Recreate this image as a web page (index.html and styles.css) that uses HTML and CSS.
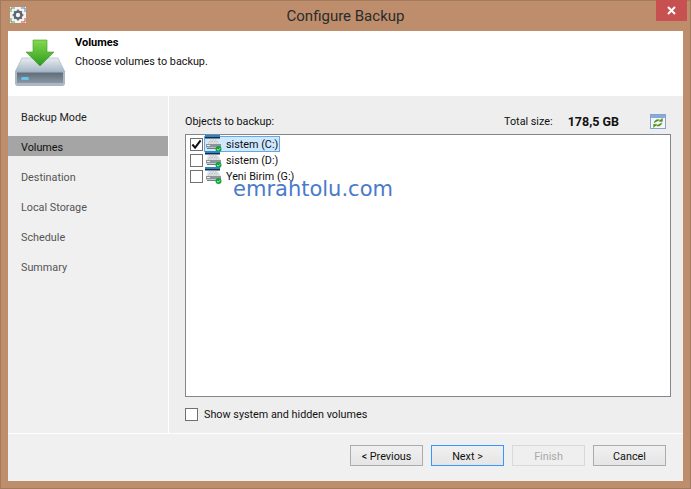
FILE: index.html
```html
<!DOCTYPE html>
<html lang="en">
<head>
<meta charset="utf-8">
<title>Configure Backup</title>
<link rel="stylesheet" href="styles.css">
</head>
<body>
<div class="window">
  <header class="titlebar">
    <svg class="app-icon" width="16" height="16" viewBox="0 0 16 16">
      <rect x="0" y="0" width="16" height="16" fill="#f4f4f4"/>
      <path d="M1 5V1h4" fill="none" stroke="#4f9a58"/><path d="M11 1h4v4" fill="none" stroke="#4b86c8"/>
      <path d="M1 11v4h4" fill="none" stroke="#4f9a58"/><path d="M11 15h4v-4" fill="none" stroke="#d0493c"/>
      <circle cx="8" cy="8" r="3.400" fill="none" stroke="#5c6670" stroke-width="2.400"/>
      <path d="M8 2.600v2M8 11.400v2M2.600 8h2M11.400 8h2M4.200 4.200l1.400 1.400M10.400 10.400l1.400 1.400M4.200 11.800l1.400-1.400M10.400 5.600l1.400-1.400" stroke="#5c6670" stroke-width="1.600"/>
    </svg>
    <span class="title">Configure Backup</span>
    <button class="close" aria-label="Close">
      <svg width="9" height="9" viewBox="0 0 9 9"><path d="M1 1l7 7M8 1l-7 7" stroke="#fff" stroke-width="2"/></svg>
    </button>
  </header>
  <div class="client">
    <section class="banner">
      <svg class="banner-icon" width="51" height="48" viewBox="0 0 51 48">
        <defs>
          <linearGradient id="top" x1="0" y1="0" x2="0" y2="1"><stop offset="0" stop-color="#e8ecf0"/><stop offset="1" stop-color="#a4b5c6"/></linearGradient>
          <linearGradient id="front" x1="0" y1="0" x2="0" y2="1"><stop offset="0" stop-color="#5f6b77"/><stop offset="1" stop-color="#8a96a2"/></linearGradient>
          <linearGradient id="arrow" x1="0" y1="0" x2="0" y2="1"><stop offset="0" stop-color="#86da4e"/><stop offset="1" stop-color="#2c9a1e"/></linearGradient>
        </defs>
        <path d="M7 19h36l7 14H0z" fill="url(#top)" stroke="#9fb0bf" stroke-width=".6"/>
        <path d="M0 33h50v11a3 3 0 0 1-3 3H3a3 3 0 0 1-3-3z" fill="#a9b8c6"/>
        <rect x="2" y="33.500" width="46" height="10.500" fill="url(#front)"/>
        <rect x="6" y="38" width="8" height="3" rx="1.500" fill="#66c4ee"/>
        <path d="M18 1h14v12h7L25 27 11 13h7z" fill="url(#arrow)" stroke="#3f9c2c" stroke-width=".6"/>
      </svg>
      <div class="banner-text">
        <h1 class="banner-title">Volumes</h1>
        <p class="banner-sub">Choose volumes to backup.</p>
      </div>
    </section>
    <div class="middle">
      <nav class="steps">
        <div class="step done">Backup Mode</div>
        <div class="step current">Volumes</div>
        <div class="step">Destination</div>
        <div class="step">Local Storage</div>
        <div class="step">Schedule</div>
        <div class="step">Summary</div>
      </nav>
      <main class="content">
        <div class="list-head">
          <span class="list-label">Objects to backup:</span>
          <span class="total-label">Total size:</span>
          <strong class="total-value">178,5 GB</strong>
          <svg class="refresh" width="16" height="15" viewBox="0 0 16 15">
            <rect x=".5" y=".5" width="15" height="14" fill="#f3f6fb" stroke="#8aa4c8"/>
            <rect x="1" y="1" width="14" height="3" fill="#86aade"/>
            <path d="M4 9a4 4 0 0 1 6.200-2.800L9 7.500h3.500V4l-1.200 1.200" fill="#4f8f10" stroke="#4f8f10" stroke-width=".3"/>
            <path d="M12 8.500a4 4 0 0 1-6.200 3L7 10.200H3.500V13.700l1.200-1.200" fill="#4f8f10" stroke="#4f8f10" stroke-width=".3"/>
          </svg>
        </div>
        <div class="list">
          <div class="row">
            <span class="box checked"><svg width="12" height="11" viewBox="0 0 12 11"><path d="M1.500 5.500l3 3.500 6-8" fill="none" stroke="#111" stroke-width="2.200"/></svg></span>
            <span class="item selected">
              <svg class="drive" width="17" height="17" viewBox="0 0 17 17"><use href="#drive"/></svg>
              <span class="row-label">sistem (C:)</span>
            </span>
          </div>
          <div class="row">
            <span class="box"></span>
            <span class="item">
              <svg class="drive" width="17" height="17" viewBox="0 0 17 17"><use href="#drive"/></svg>
              <span class="row-label">sistem (D:)</span>
            </span>
          </div>
          <div class="row">
            <span class="box"></span>
            <span class="item">
              <svg class="drive" width="17" height="17" viewBox="0 0 17 17"><use href="#drive"/></svg>
              <span class="row-label">Yeni Birim (G:)</span>
            </span>
          </div>
        </div>
        <label class="show-hidden"><span class="box"></span>Show system and hidden volumes</label>
        <div class="watermark">emrahtolu.com</div>
      </main>
    </div>
    <footer class="footer">
      <button class="btn">&lt; Previous</button>
      <button class="btn default">Next &gt;</button>
      <button class="btn disabled">Finish</button>
      <button class="btn">Cancel</button>
    </footer>
  </div>
</div>
<svg class="defs" width="0" height="0">
  <symbol id="drive" viewBox="0 0 17 17">
    <rect x="0" y="0" width="15" height="2" fill="#2488cc"/>
    <rect x="0" y="2" width="15" height="1.500" fill="#1d2a3a"/>
    <path d="M3 4h10l3 5H1z" fill="#e4e7ea"/>
    <path d="M5 5h7M4 6.500h9M3 8h11" stroke="#aab0b6" stroke-width=".7" stroke-dasharray="1.500 1"/>
    <rect x="1" y="9" width="15" height="3.500" fill="#8c959c"/>
    <rect x="2" y="10" width="3" height="1" fill="#eee"/>
    <path d="M2 13.500h9" stroke="#7a7a7a"/>
    <circle cx="13.500" cy="14" r="3" fill="#12a534"/>
    <path d="M12 14l1.200 1.200 2-2" fill="none" stroke="#cfe" stroke-width=".8"/>
  </symbol>
</svg>
</body>
</html>
```

FILE: styles.css
```css
* { box-sizing: border-box; }
html, body { margin: 0; padding: 0; height: 100%; }
body { font-family: Roboto, "Liberation Sans", sans-serif; font-size: 10.800px; color: #111; background: #bd8d6c; overflow: hidden; }
.window { width: 691px; height: 489px; display: flex; flex-direction: column; background: #bd8d6c; border: 1px solid #a27a5e; padding: 0 7px 7px; }
.titlebar { height: 30px; flex: none; display: flex; align-items: center; justify-content: center; position: relative; }
.app-icon { position: absolute; left: 2px; top: 6px; }
.title { font-size: 15px; color: #2b2b2b; }
.close { position: absolute; right: -4px; top: -1px; width: 31px; height: 21px; border: 0; padding: 0; background: #c75050; display: flex; align-items: center; justify-content: center; }
.client { flex: 1; display: flex; flex-direction: column; min-height: 0; background: #f0f0f0; }
.banner { height: 65px; flex: none; background: #fff; display: flex; }
.banner-icon { margin: 8px 0 0 7px; flex: none; }
.banner-text { margin-left: 9px; padding-top: 5px; }
.banner-title { margin: 0; font-size: 11px; font-weight: 700; color: #000; line-height: 13px; }
.banner-sub { margin: 6px 0 0; line-height: 14px; color: #111; }
.middle { flex: 1; display: flex; min-height: 0; border-bottom: 1px solid #fff; }
.steps { width: 161px; flex: none; border-right: 1px solid #fff; padding-top: 10px; display: flex; flex-direction: column; gap: 10px; background: #f0f0f0; }
.step { height: 20px; line-height: 23px; padding-left: 13px; color: #555; }
.step.done { color: #222; }
.step.current { background: #a5a5a5; color: #111; }
.content { flex: 1; position: relative; padding: 15px 12px 0 16px; background: #eee; display: flex; flex-direction: column; }
.list-head { height: 23px; flex: none; display: flex; align-items: flex-start; line-height: 22px; }
.list-label { flex: 1; }
.total-label { margin-right: 15px; }
.total-value { font-size: 12.500px; margin-right: 31px; color: #111; }
.refresh { margin: 3px 5px 0 0; }
.list { height: 263px; flex: none; background: #fff; border: 1px solid #82878d; padding: 1px 0 0 4px; }
.row { height: 16px; display: flex; align-items: center; }
.box { width: 13px; height: 13px; flex: none; border: 1px solid #707070; background: #fff; display: inline-flex; align-items: center; justify-content: center; }
.item { display: flex; align-items: center; height: 16px; margin-left: 1px; padding-right: 1px; border: 1px solid transparent; }
.item.selected { background: #cde8ff; border-color: #66a7e8; }
.drive { flex: none; margin: -1px 0 0 0; position: relative; z-index: 1; }
.row-label { margin-left: 4px; line-height: 14px; margin-top: 2px; }
.show-hidden { margin-top: 10px; display: flex; align-items: center; gap: 6px; height: 14px; }
.watermark { position: absolute; left: 64px; top: 81px; font-family: "DejaVu Sans", sans-serif; font-size: 21px; color: #4a7bc9; }
.footer { height: 47px; flex: none; display: flex; justify-content: flex-end; align-items: flex-start; gap: 8px; padding: 11px 17px 0 0; background: #f0f0f0; }
.btn { width: 73px; height: 21px; padding: 2px 0 0; font: inherit; color: #111; border: 1px solid #acacac; background: linear-gradient(#f0f0f0, #e5e5e5); }
.btn.default { border-color: #3399ff; }
.btn.disabled { color: #a8a8a8; border-color: #d9d9d9; background: #efefef; }
.defs { position: absolute; }
```
